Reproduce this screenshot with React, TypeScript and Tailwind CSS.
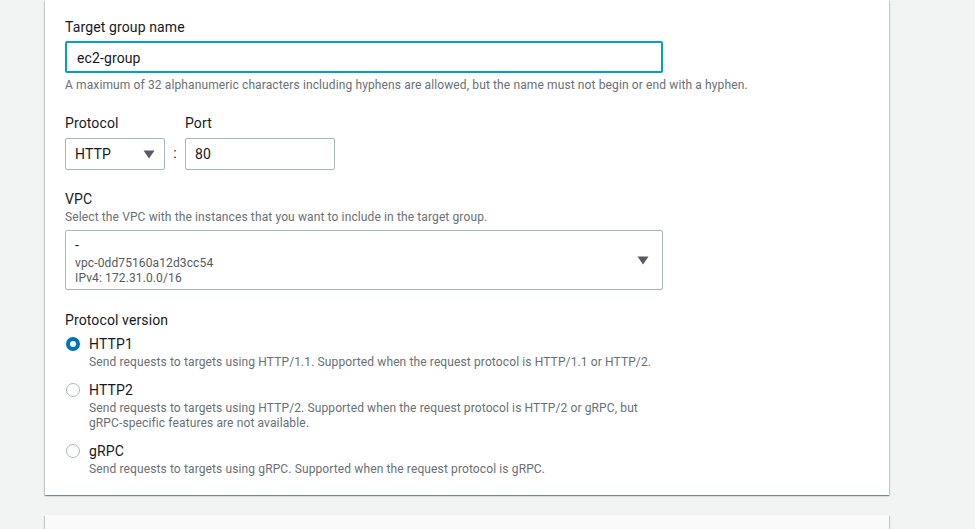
import React from "react";

const font = { fontFamily: "Roboto, 'Noto Sans', Arial, sans-serif" };

function Caret() {
  return (
    <svg width="12" height="9" viewBox="0 0 12 9" className="shrink-0">
      <path d="M0.5 0.5 H11.5 L6 8.5 Z" fill="#545b64" />
    </svg>
  );
}

function Radio({ checked }: { checked?: boolean }) {
  return checked ? (
    <span className="box-border block h-[14px] w-[14px] rounded-full border-[4px] border-[#0073bb] bg-white" />
  ) : (
    <span className="box-border block h-[14px] w-[14px] rounded-full border border-[#aab7b8] bg-white" />
  );
}

const options = [
  {
    label: "HTTP1",
    desc: ["Send requests to targets using HTTP/1.1. Supported when the request protocol is HTTP/1.1 or HTTP/2."],
    checked: true,
  },
  {
    label: "HTTP2",
    desc: [
      "Send requests to targets using HTTP/2. Supported when the request protocol is HTTP/2 or gRPC, but",
      "gRPC-specific features are not available.",
    ],
  },
  {
    label: "gRPC",
    desc: ["Send requests to targets using gRPC. Supported when the request protocol is gRPC."],
  },
];

export default function App() {
  return (
    <div
      className="min-h-[529px] w-[975px] overflow-hidden bg-[#f2f3f3] tracking-[0.12px] text-[#16191f]"
      style={font}
    >
      <div className="ml-[45px] w-[844px] bg-white pl-[20px] pb-[18px] pt-[17px] shadow-[0_1px_1px_0_rgba(0,28,36,0.3),1px_1px_1px_0_rgba(0,28,36,0.15),-1px_1px_1px_0_rgba(0,28,36,0.15)]">
        {/* Target group name */}
        <div className="text-[14px] leading-[20px]">Target group name</div>
        <div className="mt-[4px] box-border flex h-[32px] w-[598px] items-center rounded-[2px] border-2 border-[#00a1c9] pl-[10px] pt-[2px] text-[14px]">
          ec2-group
        </div>
        <div className="mt-[4px] text-[12px] leading-[16px] text-[#687078]">
          A maximum of 32 alphanumeric characters including hyphens are allowed, but the name must not begin or end with a hyphen.
        </div>

        {/* Protocol / Port */}
        <div className="mt-[20px] flex">
          <div className="w-[100px]">
            <div className="text-[14px] leading-[20px]">Protocol</div>
            <div className="mt-[5px] box-border flex h-[32px] w-[100px] items-center justify-between rounded-[2px] border border-[#aab7b8] pl-[9px] pr-[9px] text-[14px]">
              <span>HTTP</span>
              <Caret />
            </div>
          </div>
          <div className="flex w-[20px] items-end justify-center pb-[6px] text-[14px]">:</div>
          <div>
            <div className="text-[14px] leading-[20px]">Port</div>
            <div className="mt-[5px] box-border flex h-[32px] w-[150px] items-center rounded-[2px] border border-[#aab7b8] pl-[9px] text-[14px]">
              80
            </div>
          </div>
        </div>

        {/* VPC */}
        <div className="mt-[19px] text-[14px] leading-[20px]">VPC</div>
        <div className="text-[12px] leading-[16px] text-[#687078]">
          Select the VPC with the instances that you want to include in the target group.
        </div>
        <div className="mt-[5px] box-border flex h-[60px] w-[598px] items-center justify-between rounded-[2px] border border-[#aab7b8] pl-[9px] pr-[13px]">
          <div className="self-start pt-[4px]">
            <div className="text-[14px] leading-[21px]">-</div>
            <div className="text-[12px] leading-[15px] text-[#545b64]">vpc-0dd75160a12d3cc54</div>
            <div className="text-[12px] leading-[15px] text-[#545b64]">IPv4: 172.31.0.0/16</div>
          </div>
          <Caret />
        </div>

        {/* Protocol version */}
        <div className="mt-[20px] text-[14px] leading-[20px]">Protocol version</div>
        <div className="mt-[4px] flex flex-col gap-[10px]">
          {options.map((o) => (
            <div key={o.label} className="flex">
              <div className="flex h-[20px] w-[24px] items-center pl-[1px]">
                <Radio checked={o.checked} />
              </div>
              <div>
                <div className="text-[14px] leading-[20px]">{o.label}</div>
                <div className="mt-[1px] text-[12px] leading-[15px] text-[#687078]">
                  {o.desc.map((d) => (
                    <div key={d}>{d}</div>
                  ))}
                </div>
              </div>
            </div>
          ))}
        </div>
      </div>

      <div className="ml-[45px] mt-[20px] h-[40px] w-[844px] bg-[#fafafa] shadow-[0_1px_1px_0_rgba(0,28,36,0.3),1px_1px_1px_0_rgba(0,28,36,0.15),-1px_1px_1px_0_rgba(0,28,36,0.15)]" />
    </div>
  );
}
